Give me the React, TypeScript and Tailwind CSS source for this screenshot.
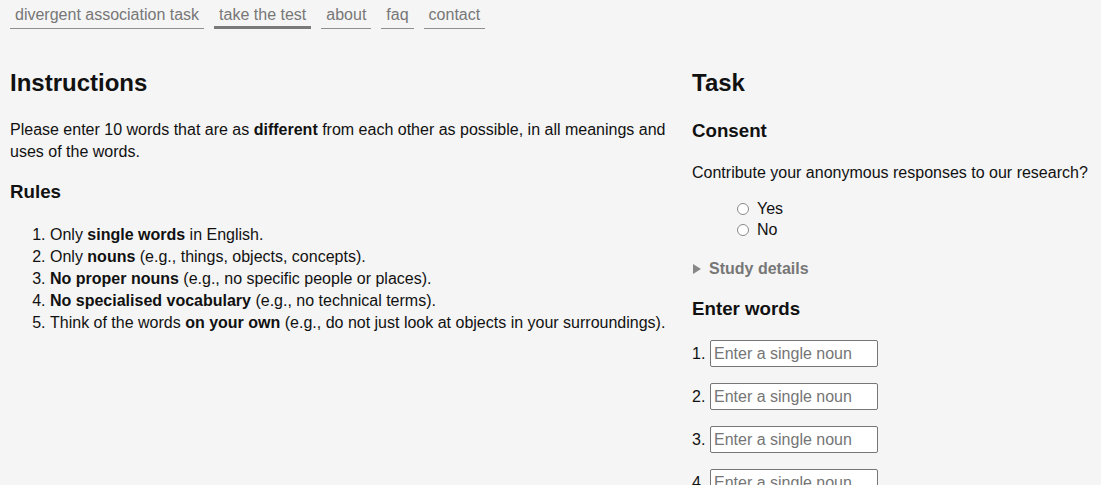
import React from "react";

const navItems = [
  { label: "divergent association task", active: false },
  { label: "take the test", active: true },
  { label: "about", active: false },
  { label: "faq", active: false },
  { label: "contact", active: false },
];

const rules: [string, string, string][] = [
  ["Only ", "single words", " in English."],
  ["Only ", "nouns", " (e.g., things, objects, concepts)."],
  ["", "No proper nouns", " (e.g., no specific people or places)."],
  ["", "No specialised vocabulary", " (e.g., no technical terms)."],
  ["Think of the words ", "on your own", " (e.g., do not just look at objects in your surroundings)."],
];

const Radio = ({ label }: { label: string }) => (
  <label className="flex items-center h-[21px]">
    <span className="w-[12px] h-[12px] rounded-full border border-[#8a8a8a] bg-white ml-[45px] mr-[8px]" />
    <span>{label}</span>
  </label>
);

export default function App() {
  return (
    <div className="min-h-screen bg-[#f5f5f5] text-[#111] text-[16px] font-['Liberation_Sans',Arial,sans-serif] overflow-hidden">
      <nav className="flex items-end gap-[10px] px-[10px] pt-[5px]">
        {navItems.map((item) => (
          <a
            key={item.label}
            className={
              item.active
                ? "px-[5px] pb-[1px] leading-[20px] text-[#777] border-b-[3px] border-[#7a7a7a]"
                : "px-[5px] pb-[3px] leading-[20px] text-[#777] border-b border-[#8f8f8f]"
            }
          >
            {item.label}
          </a>
        ))}
      </nav>

      <main className="flex gap-[10px] px-[10px] pt-[39px]">
        <section className="w-[672px] shrink-0">
          <h2 className="text-[24px] leading-[29px] font-bold">Instructions</h2>
          <p className="mt-[22px] leading-[22px]">
            Please enter 10 words that are as <b>different</b> from each other as possible, in all meanings and uses of the words.
          </p>
          <h3 className="mt-[18px] text-[18.72px] leading-[22px] font-bold">Rules</h3>
          <ol className="mt-[21px] list-decimal list-outside pl-[40px] leading-[22px]">
            {rules.map(([pre, bold, post], i) => (
              <li key={i}>
                {pre}
                <b>{bold}</b>
                {post}
              </li>
            ))}
          </ol>
        </section>

        <section className="flex-1 min-w-0 whitespace-nowrap">
          <h2 className="text-[24px] leading-[29px] font-bold">Task</h2>
          <h3 className="mt-[23px] text-[18.72px] leading-[22px] font-bold">Consent</h3>
          <p className="mt-[20px] leading-[22px]">Contribute your anonymous responses to our research?</p>
          <div className="mt-[14px] flex flex-col">
            <Radio label="Yes" />
            <Radio label="No" />
          </div>
          <div className="mt-[18px] flex items-center h-[22px] text-[#777] font-bold">
            <svg width="8" height="10" viewBox="0 0 8 10" className="ml-[1px] mr-[8px]">
              <path d="M0 0 L8 5 L0 10 Z" fill="#888" />
            </svg>
            Study details
          </div>
          <h3 className="mt-[18px] text-[18.72px] leading-[22px] font-bold">Enter words</h3>
          <div className="mt-[20px] flex flex-col gap-[16px]">
            {[1, 2, 3, 4].map((n) => (
              <div key={n} className="flex items-center gap-[4px]">
                <span className="w-[14px]">{n}.</span>
                <input
                  placeholder="Enter a single noun"
                  className="w-[168px] h-[27px] px-[3px] bg-white border border-[#767676] rounded-[2px] text-[16px] placeholder:text-[#757575] outline-none"
                />
              </div>
            ))}
          </div>
        </section>
      </main>
    </div>
  );
}
